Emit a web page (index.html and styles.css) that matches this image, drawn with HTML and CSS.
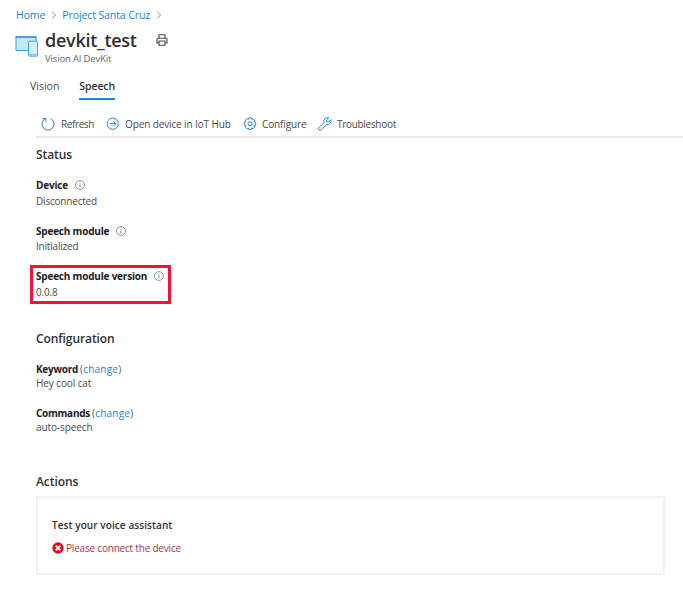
FILE: index.html
```html
<!DOCTYPE html>
<html lang="en">
<head>
<meta charset="utf-8">
<title>devkit_test</title>
<link rel="stylesheet" href="styles.css">
</head>
<body>
<svg class="defs" width="0" height="0">
  <symbol id="info" viewBox="0 0 10 10"><circle cx="5" cy="5" r="4.4" fill="none" stroke="#858585" stroke-width=".9"/><path d="M5 4.3v3M5 2.5v1" stroke="#777" stroke-width=".9"/></symbol>
  <symbol id="chevron" viewBox="0 0 6 8"><path d="M1 .7 4.7 4 1 7.3" fill="none" stroke="#999" stroke-width="1"/></symbol>
</svg>
<nav class="crumbs">
  <a class="crumb-home">Home</a><svg class="chevron"><use href="#chevron"/></svg>
  <a class="crumb-project">Project Santa Cruz</a><svg class="chevron"><use href="#chevron"/></svg>
</nav>
<header class="header">
  <svg class="device-icon" viewBox="0 0 23 21">
    <rect x="1" y="1" width="20" height="13.5" fill="#c5e8fc" stroke="#3c9be3"/>
    <path d="M.5 1h21" stroke="#2583d5" stroke-width="1.2"/>
    <rect x="13.5" y="5.2" width="9" height="15" rx=".7" fill="#d5effd" stroke="#4ba4e6"/>
    <path d="M14 18.8h8" stroke="#69b5ec"/>
  </svg>
  <div>
    <div class="title-row"><h1>devkit_test</h1>
      <svg class="print" viewBox="0 0 12 12" fill="none" stroke="#444" stroke-width="1.1"><path d="M3 4V.8h6V4M3 9H1V5.2q0-1 1-1h8q1 0 1 1V9H9M3 7h6v4.2H3z"/></svg>
    </div>
    <div class="subtitle">Vision AI DevKit</div>
  </div>
</header>
<div class="tabs"><span class="tab">Vision</span><span class="tab active">Speech</span></div>
<main>
  <div class="toolbar">
    <span class="tool refresh"><svg viewBox="0 0 14 14"><path d="M4.2 1.7A6 6 0 1 0 9.8 1.7M1.4 1.4h3.3v3.3"/></svg><span>Refresh</span></span>
    <span class="tool open"><svg viewBox="0 0 14 14"><circle cx="6.7" cy="6.7" r="5.6"/><path d="M3.4 6.7h6.2M7.2 4.1l2.6 2.6-2.6 2.6"/></svg><span>Open device in IoT Hub</span></span>
    <span class="tool configure"><svg viewBox="0 0 14 14"><path d="M5.9.8h2.2l.5 1.5 1.5-.7 1.6 1.6-.7 1.5 1.7.5v2.9l-1.7.5.7 1.5-1.6 1.6-1.5-.7-.5 1.5H5.9L5.4 11l-1.5.7-1.6-1.6.7-1.5-1.7-.5V5.2L3 4.7l-.7-1.5 1.6-1.6 1.5.7z"/><circle cx="7" cy="6.65" r="2"/></svg><span>Configure</span></span>
    <span class="tool troubleshoot"><svg viewBox="0 0 14 14"><path d="M10.7.9A3.6 3.6 0 0 0 6 5.4L1 10.6a1.5 1.5 0 0 0 2.2 2.1L8.4 7.5a3.6 3.6 0 0 0 4.3-4.7L10.6 5 8.6 4.8 8.5 3z"/></svg><span>Troubleshoot</span></span>
  </div>
  <section class="status">
    <h2>Status</h2>
    <div class="field"><div class="label"><b>Device</b><svg class="info"><use href="#info"/></svg></div><div class="value v-device">Disconnected</div></div>
    <div class="field"><div class="label"><b>Speech module</b><svg class="info"><use href="#info"/></svg></div><div class="value">Initialized</div></div>
    <div class="field marked"><div class="label"><b>Speech module version</b><svg class="info"><use href="#info"/></svg></div><div class="value v-version">0.0.8</div></div>
  </section>
  <section class="config">
    <h2>Configuration</h2>
    <div class="field"><div class="label"><b>Keyword</b><span class="change">(<a>change</a>)</span></div><div class="value">Hey cool cat</div></div>
    <div class="field"><div class="label"><b>Commands</b><span class="change">(<a>change</a>)</span></div><div class="value">auto-speech</div></div>
  </section>
  <section>
    <h2 class="h-actions">Actions</h2>
    <div class="card">
      <h3>Test your voice assistant</h3>
      <div class="error"><svg viewBox="0 0 12 12"><circle cx="6" cy="6" r="5.7" fill="#dc0b20"/><path d="m3.7 3.7 4.6 4.6m0-4.6L3.7 8.3" stroke="#fff" stroke-width="1.7"/></svg><span>Please connect the device</span></div>
    </div>
  </section>
</main>
</body>
</html>
```
FILE: styles.css
```css
* { box-sizing: border-box; }
body { margin: 0; background: #fff; color: #4a4a4a; font: 10.5px/16px "Open Sans", "Noto Sans", sans-serif; white-space: nowrap; }
h1, h2, h3 { margin: 0; font-weight: 600; color: #303030; }
svg { flex: none; }
.defs { display: block; position: absolute; }
a { color: #2583d5; }
.crumbs { display: flex; align-items: center; padding: 6px 0 0 16px; height: 23px; letter-spacing: -.1px; }
.chevron { width: 6px; height: 8px; margin: 0 5px 0 6px; }
.header { display: flex; padding: 5px 0 0 15px; }
.device-icon { width: 23px; height: 21px; margin: 8px 7px 0 0; }
.title-row { display: flex; align-items: center; height: 23px; }
h1 { font-size: 18px; line-height: 24px; letter-spacing: -.27px; }
.print { width: 12px; height: 12px; margin-left: 19px; }
.subtitle { font-size: 9.5px; color: #666; letter-spacing: -.15px; }
.tabs { display: flex; gap: 20px; margin: 11px 0 0 30px; height: 22px; }
.active { font-weight: 600; border-bottom: 2px solid #2583d5; color: #333; letter-spacing: -.1px; }
main { padding-left: 36px; font-size: 10px; letter-spacing: -.2px; }
.toolbar { display: flex; align-items: center; height: 38px; padding: 11px 0 0 5px; border-bottom: 2px solid #eaeaea; }
.tool { display: flex; align-items: center; gap: 6px; height: 16px; }
.tool svg { width: 14px; height: 14px; fill: none; stroke: #2583d5; stroke-width: 1; }
.refresh { width: 65px; letter-spacing: -.4px; }
.open { width: 137px; gap: 5px; letter-spacing: -.12px; }
.configure { width: 75px; gap: 5px; letter-spacing: -.13px; }
.troubleshoot { gap: 5px; letter-spacing: -.3px; }
h2 { font-size: 12px; line-height: 16px; letter-spacing: -.08px; }
.status { padding-top: 9px; }
.status h2 { margin-bottom: 14px; }
.status .field { height: 31px; margin-bottom: 15px; }
.status .value { line-height: 15px; }
.status .v-device, .status .v-version { line-height: 17px; }
.label { display: flex; align-items: center; height: 16px; color: #555; }
.label b { color: #202020; font-weight: 700; }
.info { width: 10px; height: 10px; margin-left: 7px; }
.status .marked { width: 141px; height: 39px; margin: -4px 0 0 -6px; padding: 0 3px; border: 3px solid #ed1639; }
.config { padding-top: 27px; }
.config h2 { margin-bottom: 14px; }
.config .field { height: 30px; margin-bottom: 14px; }
.config .value { line-height: 14px; letter-spacing: -.1px; }
.config .label { height: 15px; }
.config .label b { letter-spacing: -.27px; }
.change { margin-left: 2px; letter-spacing: .22px; }
.h-actions { margin: 39px 0 6px; }
.card { width: 629px; height: 79px; border: 2px solid #f1f1f1; padding: 19px 14px; }
h3 { font-size: 10px; line-height: 16px; letter-spacing: .08px; }
.error { display: flex; align-items: center; margin-top: 7px; gap: 2px; color: #ac3349; }
.error svg { width: 12px; height: 12px; }
```
